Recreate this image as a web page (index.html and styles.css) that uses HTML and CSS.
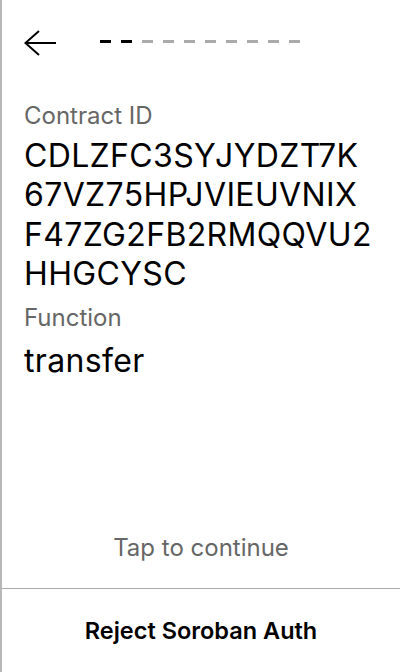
FILE: index.html
```html
<!DOCTYPE html>
<html lang="en">
<head>
<meta charset="utf-8">
<title>Soroban Auth</title>
<link rel="stylesheet" href="styles.css">
</head>
<body>
<div class="screen">
  <div class="header">
    <button class="back" aria-label="Back">
      <svg width="32" height="26" viewBox="0 0 32 26"><path d="M1 13H32M15 1L1.4 13L15 25" fill="none" stroke="#000" stroke-width="2"/></svg>
    </button>
    <div class="steps">
      <span class="step on"></span><span class="step on"></span><span class="step"></span><span class="step"></span><span class="step"></span><span class="step"></span><span class="step"></span><span class="step"></span><span class="step"></span><span class="step"></span>
    </div>
  </div>
  <div class="details">
    <div class="label">Contract ID</div>
    <div class="value">CDLZFC3SYJYDZT7K<br>67VZ75HPJVIEUVNIX<br>F47ZG2FB2RMQQVU2<br>HHGCYSC</div>
    <div class="label label-2">Function</div>
    <div class="value value-2">transfer</div>
  </div>
  <div class="tap">Tap to continue</div>
  <div class="footer">
    <button class="reject">Reject Soroban Auth</button>
  </div>
</div>
</body>
</html>
```

FILE: styles.css
```css
* { box-sizing: border-box; }
html, body { margin: 0; padding: 0; background: #fff; }
body { font-family: Inter, "Noto Sans", sans-serif; color: #000; }
.screen {
  width: 400px;
  height: 672px;
  border-left: 2px solid #b8b8b8;
  display: flex;
  flex-direction: column;
}
.header {
  display: flex;
  align-items: center;
  padding: 30px 0 0 22px;
}
.back {
  border: 0;
  background: none;
  padding: 0;
  width: 32px;
  height: 26px;
  display: block;
}
.back svg { display: block; }
.steps {
  display: flex;
  gap: 10px;
  margin-left: 44px;
  margin-top: -3px;
}
.step { width: 11px; height: 3px; background: #aaa; }
.step.on { background: #000; }
.details {
  flex: 1;
  padding: 46.3px 4px 0 22px;
}
.label {
  font-size: 24px;
  line-height: 28px;
  color: #666;
}
.value {
  font-size: 32px;
  line-height: 39.4px;
  margin-top: 5.5px;
  letter-spacing: 0.35px;
  white-space: nowrap;
}
.label-2 { margin-top: 10.2px; }
.value-2 { margin-top: 9.1px; }
.tap {
  text-align: center;
  font-size: 24px;
  line-height: 28px;
  color: #666;
  padding-bottom: 26px;
}
.footer {
  border-top: 1px solid #aaa;
  height: 84px;
  padding-top: 28px;
  text-align: center;
}
.reject {
  border: 0;
  background: none;
  font-family: inherit;
  font-size: 23.5px;
  line-height: 28px;
  font-weight: 600;
  color: #000;
  padding: 0;
}
```
